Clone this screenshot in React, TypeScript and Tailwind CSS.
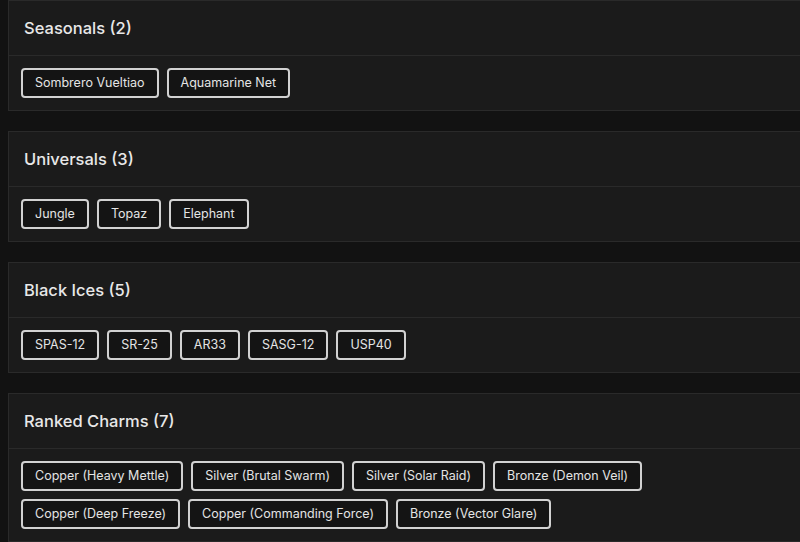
import React from 'react'

interface Group {
  title: string
  items: string[]
}

const groups: Group[] = [
  { title: 'Seasonals', items: ['Sombrero Vueltiao', 'Aquamarine Net'] },
  { title: 'Universals', items: ['Jungle', 'Topaz', 'Elephant'] },
  { title: 'Black Ices', items: ['SPAS-12', 'SR-25', 'AR33', 'SASG-12', 'USP40'] },
  {
    title: 'Ranked Charms',
    items: [
      'Copper (Heavy Mettle)',
      'Silver (Brutal Swarm)',
      'Silver (Solar Raid)',
      'Bronze (Demon Veil)',
      'Copper (Deep Freeze)',
      'Copper (Commanding Force)',
      'Bronze (Vector Glare)',
    ],
  },
]

export default function App() {
  return (
    <div
      className="h-[542px] w-[800px] overflow-hidden bg-[#121212] text-[#e6e6e6]"
      style={{ fontFamily: 'Inter, "Open Sans", sans-serif' }}
    >
      <div className="ml-2 flex w-[820px] flex-col gap-5">
        {groups.map((group) => (
          <section key={group.title} className="border border-[#2a2a2a] bg-[#1b1b1b]">
            {/* Header */}
            <div className="flex h-[55px] items-center border-b border-[#2a2a2a] pl-[15px]">
              <h2 className="text-[16.5px] font-medium text-[#e8e8e8]">
                {group.title} ({group.items.length})
              </h2>
            </div>
            {/* Items */}
            <div className="flex w-[680px] flex-wrap gap-2 px-3 py-3">
              {group.items.map((item) => (
                <span
                  key={item}
                  className="flex h-[30px] items-center rounded border-2 border-[#d2d2d2] bg-[#141414] px-3 text-[12.5px] text-[#e4e4e4]"
                >
                  {item}
                </span>
              ))}
            </div>
          </section>
        ))}
      </div>
    </div>
  )
}
